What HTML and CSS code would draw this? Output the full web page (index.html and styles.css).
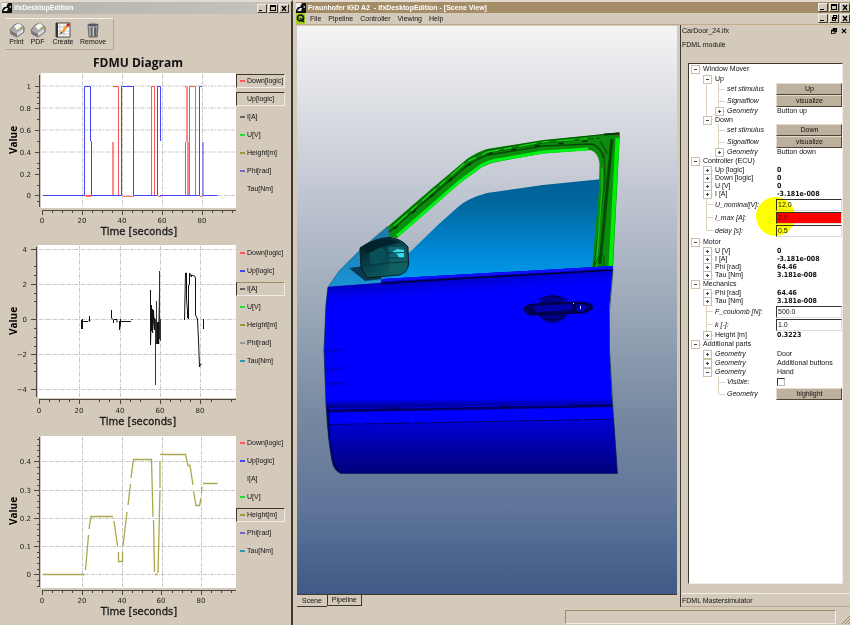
FILE: index.html
```html
<!DOCTYPE html>
<html lang="en">
<head>
<meta charset="utf-8">
<title>ifxDesktopEdition</title>
<link rel="stylesheet" href="styles.css">
</head>
<body>
<main class="desktop">
  <section class="window diagram-window">
    <header class="titlebar titlebar-idle">
      <svg class="app-icon" viewBox="0 0 10 10"><path fill="#111" d="M0 0h10v10H0z"/><path fill="#eee" d="M0 0h6L4 4H2L0 7zM1 8l3-3h2l-1 3zM7 4l2-1v2zM6 8l3-2"/></svg>
      <h1>ifxDesktopEdition</h1>
      <div class="win-buttons">
        <button class="wb" aria-label="Minimize"><svg viewBox="0 0 8 7"><path d="M1 5h3v1H1z"/></svg></button>
        <button class="wb" aria-label="Maximize"><svg viewBox="0 0 8 7"><path d="M1 0h6v6H1zM2 2v3h4V2z" fill-rule="evenodd"/></svg></button>
        <button class="wb" aria-label="Close"><svg viewBox="0 0 8 7"><path d="M2 1l4 5M6 1L2 6" stroke="#000" stroke-width="1.3"/></svg></button>
      </div>
    </header>
    <nav class="toolbar">
      <button class="tool">
        <svg viewBox="0 0 16 16"><path fill="#aaa" stroke="#555" stroke-width=".7" d="M1 8l4-5 5-2 5 4v5l-7 5-6-3z"/><path fill="#f4f4f4" d="M5 4l5-3 3 3-5 4z"/><path fill="#777" d="M2 9l6 3v3l-6-3z"/><path fill="#ddd" d="M8 11l6-4v3l-6 4z"/><path fill="#9b2" d="M11 5h2v2h-2z"/></svg>
        <span>Print</span></button>
      <button class="tool">
        <svg viewBox="0 0 16 16"><path fill="#aaa" stroke="#555" stroke-width=".7" d="M1 8l4-5 5-2 5 4v5l-7 5-6-3z"/><path fill="#f4f4f4" d="M5 4l5-3 3 3-5 4z"/><path fill="#777" d="M2 9l6 3v3l-6-3z"/><path fill="#ddd" d="M8 11l6-4v3l-6 4z"/><path fill="#9b2" d="M11 5h2v2h-2z"/></svg>
        <span>PDF</span></button>
      <button class="tool tool-wide">
        <svg viewBox="0 0 16 16"><path fill="#fff" stroke="#444" d="M1 1h14v14H1z"/><path stroke="#aaa" stroke-width=".7" d="M2 5h12M2 9h12M2 12h12M5 2v12M9 2v12"/><path fill="#333" d="M1 1h2v14H1z"/><path fill="#e93" d="M6 10l5-7 2 2-5 6z"/><path fill="#b22" d="M11 3l2-2 2 2-2 2z"/><path fill="#222" d="M5 12l1-2 2 1z"/></svg>
        <span>Create</span></button>
      <button class="tool tool-wide">
        <svg viewBox="0 0 16 16"><path fill="#8a8e92" stroke="#444" stroke-width=".7" d="M3 4h10l-1 11H4z"/><path stroke="#333" d="M6 5v9M10 5v9"/><path stroke="#ccc" d="M5 5v9M8.500 5v9"/><ellipse cx="8" cy="3" rx="6" ry="2" fill="#556" stroke="#bbb"/></svg>
        <span>Remove</span></button>
    </nav>
    <h2 class="diagram-title">FDMU Diagram</h2>

    <div class="chart">
      <svg class="plot" viewBox="0 71 236 172" role="img" aria-label="Logic signals over time">
        <path class="paper" d="M41 73h195v135H41z"/>
        <path class="grid" d="M42 86h194M42 108h194M42 130h194M42 152h194M42 195.500h194M82.500 74v133M122.500 74v133M162.500 74v133M202.500 74v133"/>
        <path class="axis" d="M39.500 75v132M42 210.500h194M35 86.500h5M35 108.500h5M35 130.500h5M35 152.500h5M35 174.500h5M35 195.500h5M37 97.500h3M37 92.500h3M37 103.500h3M37 119.500h3M37 141.500h3M37 163.500h3M37 168.500h3M37 185.500h3M37 201.500h3M42.500 210v5M82.500 210v5M122.500 210v5M162.500 210v5M202.500 210v5M52.500 210v3M62.500 210v3M72.500 210v3M92.500 210v3M102.500 210v3M112.500 210v3M132.500 210v3M142.500 210v3M152.500 210v3M172.500 210v3M182.500 210v3M192.500 210v3M212.500 210v3M222.500 210v3M232.500 210v3"/>
        <g fill="none">
          <path stroke="#f55" d="M43 195.500H113.500M113 86.500H118.500V195.500M151.500 195.500V86.500H154.500V195.500M185.500 195V142M186.500 142V86.500M185 86.500h3M188.500 195V142M189.500 195V86.500H195.500V195.500"/>
          <path stroke="#f88" stroke-width="2" d="M113 142v53M187 86v56M188 142v53"/>
          <path stroke="#44f" d="M43 195.500H84.500V86.500H90.500V141M91.500 141V195.500H121.500V86.500H133.500V195.500H157.500V86.500H160.500V141M160 195.500H199.500V86.500H202M203 142V195.500H217.500"/>
          <path stroke="#f77" d="M86 196.500h5M122 196.500h12M158 196.500h3M200 196.500h3"/>
        </g>
        <g class="ticks end"><text x="31" y="89">1</text><text x="31" y="111">0.8</text><text x="31" y="133">0.6</text><text x="31" y="155">0.4</text><text x="31" y="177">0.2</text><text x="31" y="198">0</text></g>
        <g class="ticks mid"><text x="42" y="223">0</text><text x="82" y="223">20</text><text x="122" y="223">40</text><text x="162" y="223">60</text><text x="202" y="223">80</text></g>
        <text class="axis-title" x="139" y="235">Time [seconds]</text>
        <text class="value-title" transform="translate(17 140) rotate(-90)">Value</text>
      </svg>
      <div class="legend">
        <button class="series pressed"><i class="key red"></i>Down[logic]</button>
        <button class="series pressed"><i class="key none"></i>Up[logic]</button>
        <button class="series"><i class="key black"></i>I[A]</button>
        <button class="series"><i class="key green"></i>U[V]</button>
        <button class="series"><i class="key olive"></i>Height[m]</button>
        <button class="series"><i class="key violet"></i>Phi[rad]</button>
        <button class="series"><i class="key none"></i>Tau[Nm]</button>
      </div>
    </div>

    <div class="chart">
      <svg class="plot" viewBox="0 243 236 190" role="img" aria-label="Current over time">
        <path class="paper" d="M38 245h198v153H38z"/>
        <path class="grid" d="M39 249.500h197M39 284.500h197M39 319.500h197M39 354.500h197M39 389.500h197M79.500 246v151M120.500 246v151M160.500 246v151M200.500 246v151"/>
        <path class="axis" d="M36.500 247v150M39 399.500h197M31 249.500h5M31 284.500h5M31 319.500h5M31 354.500h5M31 389.500h5M34 266.500h3M34 275.500h3M34 293.500h3M34 301.500h3M34 328.500h3M34 337.500h3M34 346.500h3M34 363.500h3M34 371.500h3M39.500 399v5M79.500 399v5M120.500 399v5M160.500 399v5M200.500 399v5M49.500 399v3M59.500 399v3M69.500 399v3M99.500 399v3M109.500 399v3M130.500 399v3M140.500 399v3M170.500 399v3M180.500 399v3M190.500 399v3M211.500 399v3M231.500 399v3"/>
        <g fill="none" stroke="#111">
          <path d="M81.500 320v9M82.500 319v10M83 321.500h5M88.500 321h2M89.500 321v-5M111.500 310v8l2 2v3M114 319.500h3v3M119.500 321v9l1-6v-5M121 321.500h10M132 320v-1M203.500 319v10"/>
          <path d="M150.500 290v55l1-40v26l1-22v24l1-15v-8l1 20v-12l1 8v-6"/>
          <path d="M155.500 319v66M156.500 301v43l1-22v20l1-20v20l1-52v-19M159.500 271v68l1-20v22" stroke="#333"/>
          <path d="M158 322v22" stroke-width="2.500"/>
          <path d="M184.500 320l1-47h1v26l1 12v7M188.500 319v-33l1-2v-11l2 4v-2l3 1 1 2v37l2 4 1 21 1 27 1-3h1"/>
        </g>
        <g class="ticks end"><text x="27" y="252">4</text><text x="27" y="287">2</text><text x="27" y="322">0</text><text x="27" y="357">−2</text><text x="27" y="392">−4</text></g>
        <g class="ticks mid"><text x="39" y="413">0</text><text x="79" y="413">20</text><text x="120" y="413">40</text><text x="160" y="413">60</text><text x="200" y="413">80</text></g>
        <text class="axis-title" x="138" y="425">Time [seconds]</text>
        <text class="value-title" transform="translate(17 321) rotate(-90)">Value</text>
      </svg>
      <div class="legend">
        <button class="series"><i class="key red"></i>Down[logic]</button>
        <button class="series"><i class="key blue"></i>Up[logic]</button>
        <button class="series pressed soft"><i class="key black"></i>I[A]</button>
        <button class="series"><i class="key green"></i>U[V]</button>
        <button class="series"><i class="key olive"></i>Height[m]</button>
        <button class="series"><i class="key gray"></i>Phi[rad]</button>
        <button class="series"><i class="key teal"></i>Tau[Nm]</button>
      </div>
    </div>

    <div class="chart">
      <svg class="plot" viewBox="0 433 236 190" role="img" aria-label="Window height over time">
        <path class="paper" d="M41 436h195v152H41z"/>
        <path class="grid" d="M42 461.500h194M42 490.500h194M42 518.500h194M42 546.500h194M42 574.500h194M82.500 437v150M122.500 437v150M162.500 437v150M201.500 437v150"/>
        <path class="axis" d="M39.500 437v150M42 590.500h194M34 461.500h5M34 490.500h5M34 518.500h5M34 546.500h5M34 574.500h5M37 439.500h3M37 445.500h3M37 450.500h3M37 456.500h3M37 467.500h3M37 473.500h3M37 479.500h3M37 485.500h3M37 495.500h3M37 501.500h3M37 507.500h3M37 513.500h3M37 524.500h3M37 529.500h3M37 535.500h3M37 541.500h3M37 552.500h3M37 557.500h3M37 563.500h3M37 569.500h3M37 580.500h3M37 586.500h3M42.500 590v5M82.500 590v5M122.500 590v5M161.500 590v5M201.500 590v5M52.500 590v3M62.500 590v3M72.500 590v3M92.500 590v3M102.500 590v3M112.500 590v3M132.500 590v3M142.500 590v3M152.500 590v3M172.500 590v3M182.500 590v3M191.500 590v3M211.500 590v3M221.500 590v3M231.500 590v3"/>
        <path fill="none" stroke="#aaa84c" stroke-width="1.300" d="M43 574.500H84.500M85.500 570L88.500 535M89 529L91 516.500H113M114 521L117.500 546M118.500 552L118.500 561.500H122.500V552M123 546L127 512M128 505L130.500 484M131 478L133.500 459.500H151.500L153 517M153.500 520L154.500 572M155 574.500H157.500M158 573L160 490M160 488V461M160.500 455V454.500H185.500L188 465.500H190L193 485M193.500 491L196 505.500H199.500L201 498M201.500 493L202 487M203 483.500H217.500"/>
        <g class="ticks end"><text x="31" y="464">0.4</text><text x="31" y="493">0.3</text><text x="31" y="521">0.2</text><text x="31" y="549">0.1</text><text x="31" y="577">0</text></g>
        <g class="ticks mid"><text x="42" y="603">0</text><text x="82" y="603">20</text><text x="122" y="603">40</text><text x="161" y="603">60</text><text x="201" y="603">80</text></g>
        <text class="axis-title" x="139" y="615">Time [seconds]</text>
        <text class="value-title" transform="translate(17 511) rotate(-90)">Value</text>
      </svg>
      <div class="legend">
        <button class="series"><i class="key red"></i>Down[logic]</button>
        <button class="series"><i class="key blue"></i>Up[logic]</button>
        <button class="series"><i class="key none"></i>I[A]</button>
        <button class="series"><i class="key green"></i>U[V]</button>
        <button class="series pressed"><i class="key olive"></i>Height[m]</button>
        <button class="series"><i class="key violet"></i>Phi[rad]</button>
        <button class="series"><i class="key teal"></i>Tau[Nm]</button>
      </div>
    </div>
  </section>

  <section class="window scene-window">
    <header class="titlebar titlebar-active">
      <svg class="app-icon" viewBox="0 0 10 10"><path fill="#111" d="M0 0h10v10H0z"/><path fill="#eee" d="M0 0h6L4 4H2L0 7zM1 8l3-3h2l-1 3zM7 4l2-1v2z"/></svg>
      <h1>Fraunhofer IGD A2 &nbsp;- ifxDesktopEdition - [Scene View]</h1>
      <div class="win-buttons">
        <button class="wb" aria-label="Minimize"><svg viewBox="0 0 8 7"><path d="M1 5h4v1H1z"/></svg></button>
        <button class="wb" aria-label="Maximize"><svg viewBox="0 0 8 7"><path d="M1 0h6v6H1zM2 2v3h4V2z" fill-rule="evenodd"/></svg></button>
        <button class="wb" aria-label="Close"><svg viewBox="0 0 8 7"><path d="M2 1l4 5M6 1L2 6" stroke="#000" stroke-width="1.3"/></svg></button>
      </div>
    </header>
    <nav class="menubar">
      <svg class="menu-icon" viewBox="0 0 9 11"><path fill="#a5cf1c" d="M0 0h9v11H0z"/><circle cx="4.500" cy="5" r="3" fill="none" stroke="#111" stroke-width="1.700"/><path stroke="#111" stroke-width="1.400" d="M4 5l4 4"/></svg>
      <button>File</button><button>Pipeline</button><button>Controller</button><button>Viewing</button><button>Help</button>
      <div class="win-buttons">
        <button class="wb" aria-label="Minimize view"><svg viewBox="0 0 8 7"><path d="M1 5h4v1H1z"/></svg></button>
        <button class="wb" aria-label="Restore view"><svg viewBox="0 0 8 7"><path d="M3 0h4v4H6v2H2V2h1zM4 1v1h2V1zM3 4v1h2V4z" fill-rule="evenodd"/></svg></button>
        <button class="wb" aria-label="Close view"><svg viewBox="0 0 8 7"><path d="M2 1l4 5M6 1L2 6" stroke="#000" stroke-width="1.3"/></svg></button>
      </div>
    </nav>
    <div class="workspace">
      <div class="scene">
        <div class="viewport">
          <svg class="model" viewBox="297 26 380 568" role="img" aria-label="Car door model">
            <defs>
              <linearGradient id="glass" x1="0" y1="0" x2="0" y2="1"><stop offset="0" stop-color="#005f96"/><stop offset=".25" stop-color="#00699f"/><stop offset=".7" stop-color="#0088d6"/><stop offset="1" stop-color="#009cf0"/></linearGradient>
              <linearGradient id="upper" gradientUnits="userSpaceOnUse" x1="0" y1="270" x2="4" y2="326"><stop offset="0" stop-color="#0000a8"/><stop offset=".25" stop-color="#000090"/><stop offset=".6" stop-color="#0000a0"/><stop offset=".85" stop-color="#0000e6"/><stop offset="1" stop-color="#0000ff"/></linearGradient>
              <linearGradient id="lower" x1="0" y1="0" x2="0" y2="1"><stop offset="0" stop-color="#0000dc"/><stop offset=".45" stop-color="#0000ac"/><stop offset="1" stop-color="#000078"/></linearGradient>
              <linearGradient id="strip" x1="0" y1="0" x2="0" y2="1"><stop offset="0" stop-color="#0000ff"/><stop offset="1" stop-color="#00007a"/></linearGradient>
              <linearGradient id="mirror" x1="0" y1="0" x2="1" y2="1"><stop offset="0" stop-color="#00141e"/><stop offset=".4" stop-color="#06404a"/><stop offset="1" stop-color="#107070"/></linearGradient>
              <linearGradient id="corner" x1="0" y1="0" x2="0" y2="1"><stop offset="0" stop-color="#1a78a8"/><stop offset="1" stop-color="#1a94d6"/></linearGradient>
              <clipPath id="body"><path d="M328 287L381 283L382 279L613 266L611 285L609 310L609.500 350L612 402L613 410L617.500 473.500H341Q334 471 332 461Q328 440 326 405L324 350L326 305Z"/></clipPath>
            </defs>
            <path fill="url(#glass)" d="M381 279L410 252L440 223L458 207Q468 198 487 193L543 185L603 179L592 270L382 283Z"/>
            <path fill="url(#corner)" stroke="#0f4d70" stroke-width=".5" d="M388 226L360 250L339 271L328 287L381 283V278L397 262L390 236Z"/>
            <path fill="#0a8d0a" d="M388.500 226L430 190L467 159Q477 152 487 149L543 140L620 132.500L613 268L592 268L599 190L599.500 163Q598 152 590 150L543 153.500L503 160.700Q486 163 478 170L460 183L397 238L389 237Z"/>
            <g fill="none">
              <path stroke="#00f218" stroke-width="3" d="M397 236L459 182L478 168Q486 161 503 159L543 152L588 149"/>
              <path stroke="#074807" stroke-width="1.600" d="M389 232L461 171Q474 159 488 155L543 146L592 144Q602 148 603 158"/>
              <path stroke="#075507" stroke-width="1" d="M389 227L467 160L487 150L543 141L619 133M393 228L465 166L488 153L543 143L600 138"/>
              <path stroke="#13d913" stroke-width="1.200" stroke-dasharray="18 5 8 7" d="M394 226L466 162L488 152L543 142L596 138"/>
              <path stroke="#022c02" stroke-width="1.500" stroke-dasharray="5 19" d="M394 229L465 167L488 154L543 145L600 140"/>
              <path stroke="#00ef08" stroke-width="4" d="M617.500 138L610.500 267"/>
              <path stroke="#044904" stroke-width="3" d="M612 139L607 190L600 264"/>
              <path stroke="#0a5c0a" stroke-width="1.500" d="M604 152L605 180L594 267M600 141L608 154"/>
              <path stroke="#17ba17" stroke-width="1.500" d="M602 168L602 192L596 267"/>
              <path stroke="#055005" d="M594 267l6-13 4 2v10"/>
              <path stroke="#033903" stroke-width="2" d="M604 134.500L619 133.500"/>
            </g>
            <path fill="#d02020" d="M616 135h2v1h-2zM595 237h1v2h-1zM604 165h1v1h-1z"/>
            <path fill="#083a50" d="M349 268L372 265L382 279L365 281Z"/>
            <path fill="url(#mirror)" stroke="#021920" d="M360 248Q374 238 390 237.500Q402 239 408 247L408.500 265Q407 273 399 275L367 278L361 268Z"/>
            <path fill="#0a5058" d="M369 252l10-6 7 5-3 13-12 1z"/>
            <path fill="#02232c" d="M362 249l13-8 14-2 12 3-12 3-10 3-12 6z"/>
            <path fill="#116060" d="M389 257l17-1v10l-5 6-12 1z"/>
            <path fill="#126470" d="M388 247l14 0 4 5v8l-16-1z"/>
            <path fill="#31dcec" d="M397 249l7 1v8h-5l-2-4-5-2z"/>
            <path stroke="#07363e" fill="none" d="M388 253l16-.5M388 258h17M363 266l25-3 20-1"/>
            <g clip-path="url(#body)">
              <path fill="#00f" d="M320 260h300v220H320z"/>
              <path fill="url(#upper)" d="M320 260H620V302L480 314L320 322Z"/>
              <path stroke="#1010ff" stroke-width="3" d="M381 280L614 267"/>
              <path stroke="#00003c" stroke-width="1.500" d="M381 283.500L470 278L614 270"/>
              <path fill="url(#strip)" d="M320 401L620 398V406L320 409Z"/>
              <path stroke="#000068" stroke-width="3" d="M326 411L615 405.500"/>
              <path stroke="#00f" stroke-width=".8" d="M329 408.500L380 408M400 408L500 406M510 405.500L570 405"/>
              <path fill="url(#lower)" d="M325 424.500L617 419V475H325z"/>
              <path stroke="#00006a" stroke-dasharray="30 4 14 3" d="M329 424.500L440 422.500L617 419"/>
              <path stroke="#0000b0" stroke-width="3" opacity=".55" d="M325 352l17-3M325 371l17-3M325 384l20-1"/>
              <path stroke="#000060" stroke-width="2" fill="none" d="M328 406L329 440L335 466L342 474"/>
            </g>
            <path fill="none" stroke="#082c50" stroke-width=".7" d="M328 287L326 305L324 350L326 405Q328 440 332 461Q334 471 341 473.500H617.500L613 410L609.500 350V310L613 269"/>
            <ellipse cx="553" cy="309" rx="15" ry="14" fill="#000088"/>
            <path fill="#000058" stroke="#000030" d="M524 308Q527 304 536 304L575 302Q592 302 593 307Q591 312 581 313L530 315Q524 313 524 308Z"/>
            <path fill="#0000a8" d="M533 306L572 304V310L536 312Z"/>
            <path fill="none" stroke="#00003c" d="M538 300Q552 292 568 300M538 315Q552 325 567 315"/>
            <path fill="#0000c0" stroke="#000030" d="M576 304h9l3 3-4 5h-8z"/><path fill="#ccd8ff" d="M580 306h1v3h-1zM573 303h1v1h-1z"/>
          </svg>
        </div>
        <div class="tabs" role="tablist">
          <button class="tab current" role="tab">Scene</button><button class="tab" role="tab">Pipeline</button>
        </div>
      </div>
      <aside class="dock">
        <div class="dock-head"><span>CarDoor_24.ifx</span>
          <div class="dock-actions">
            <button aria-label="Float"><svg viewBox="0 0 7 7"><path d="M2 0h5v5H5v2H0V2h2zM3 2h2v1h1V2zM1 4v2h3V4z" fill-rule="evenodd"/></svg></button>
            <button aria-label="Close panel"><svg viewBox="0 0 7 7"><path d="M1 1l5 5M6 1L1 6" stroke="#000" stroke-width="1.4"/></svg></button>
          </div>
        </div>
        <p class="module">FDML module</p>
        <div class="tree">
          <div class="row head"><i class="n box minus first"></i><span>Window Mover</span></div>
          <div class="row group"><i class="n"></i><i class="n box minus"></i><span>Up</span></div>
          <div class="row action"><i class="n"></i><i class="n v"></i><i class="n tee"></i><em>set stimulus</em><button class="value">Up</button></div>
          <div class="row action"><i class="n"></i><i class="n v"></i><i class="n tee"></i><em>Signalflow</em><button class="value">visualize</button></div>
          <div class="row leaf"><i class="n"></i><i class="n v"></i><i class="n box plus end"></i><em>Geometry</em><span class="value">Button up</span></div>
          <div class="row group"><i class="n"></i><i class="n box minus end"></i><span>Down</span></div>
          <div class="row action"><i class="n"></i><i class="n"></i><i class="n tee"></i><em>set stimulus</em><button class="value">Down</button></div>
          <div class="row action"><i class="n"></i><i class="n"></i><i class="n tee"></i><em>Signalflow</em><button class="value">visualize</button></div>
          <div class="row leaf"><i class="n"></i><i class="n"></i><i class="n box plus end"></i><em>Geometry</em><span class="value">Button down</span></div>

          <div class="row head"><i class="n box minus"></i><span>Controller (ECU)</span></div>
          <div class="row leaf"><i class="n"></i><i class="n box plus"></i><span>Up [logic]</span><b class="value">0</b></div>
          <div class="row leaf"><i class="n"></i><i class="n box plus"></i><span>Down [logic]</span><b class="value">0</b></div>
          <div class="row leaf"><i class="n"></i><i class="n box plus"></i><span>U [V]</span><b class="value">0</b></div>
          <div class="row leaf"><i class="n"></i><i class="n box plus"></i><span>I [A]</span><b class="value">-3.181e-008</b></div>
          <div class="row field"><i class="n"></i><i class="n tee"></i><label for="unom">U_nominal[V]:</label><input class="value" id="unom" value="12.0"></div>
          <div class="row field"><i class="n"></i><i class="n tee"></i><label for="imax">I_max [A]:</label><input class="value alert" id="imax" value="2.0"><i class="pointer-halo"></i></div>
          <div class="row field"><i class="n"></i><i class="n tee end"></i><label for="delay">delay [s]:</label><input class="value" id="delay" value="0.5"></div>

          <div class="row head"><i class="n box minus"></i><span>Motor</span></div>
          <div class="row leaf"><i class="n"></i><i class="n box plus"></i><span>U [V]</span><b class="value">0</b></div>
          <div class="row leaf"><i class="n"></i><i class="n box plus"></i><span>I [A]</span><b class="value">-3.181e-008</b></div>
          <div class="row leaf"><i class="n"></i><i class="n box plus"></i><span>Phi [rad]</span><b class="value">64.46</b></div>
          <div class="row leaf"><i class="n"></i><i class="n box plus end"></i><span>Tau [Nm]</span><b class="value">3.181e-008</b></div>

          <div class="row head"><i class="n box minus"></i><span>Mechanics</span></div>
          <div class="row leaf"><i class="n"></i><i class="n box plus"></i><span>Phi [rad]</span><b class="value">64.46</b></div>
          <div class="row leaf"><i class="n"></i><i class="n box plus"></i><span>Tau [Nm]</span><b class="value">3.181e-008</b></div>
          <div class="row field"><i class="n"></i><i class="n tee"></i><label for="fc">F_coulomb [N]:</label><input class="value" id="fc" value="500.0"></div>
          <div class="row field"><i class="n"></i><i class="n tee"></i><label for="kk">k [-]:</label><input class="value" id="kk" value="1.0"></div>
          <div class="row leaf"><i class="n"></i><i class="n box plus end"></i><span>Height [m]</span><b class="value">0.3223</b></div>

          <div class="row head"><i class="n box minus end"></i><span>Additional parts</span></div>
          <div class="row group"><i class="n"></i><i class="n box plus"></i><em>Geometry</em><span class="value">Door</span></div>
          <div class="row group"><i class="n"></i><i class="n box plus"></i><em>Geometry</em><span class="value">Additional buttons</span></div>
          <div class="row group"><i class="n"></i><i class="n box minus end"></i><em>Geometry</em><span class="value">Hand</span></div>
          <div class="row action"><i class="n"></i><i class="n"></i><i class="n tee"></i><label for="vis">Visible:</label><span class="value"><input type="checkbox" id="vis"></span></div>
          <div class="row action"><i class="n"></i><i class="n"></i><i class="n tee end"></i><em>Geometry</em><button class="value">highlight</button></div>
        </div>
        <p class="dock-foot">FDML Mastersimulator</p>
      </aside>
    </div>
    <footer class="statusbar"><div class="status-field"></div><svg class="grip" viewBox="0 0 8 8"><path stroke="#a08a62" d="M0 8l8-8M3 8l5-5M6 8l2-2"/></svg></footer>
  </section>
</main>
</body>
</html>
```
FILE: styles.css
```css
:root {
  --face: #d4cabb;
  --light: #f2ede4;
  --shade: #a08a62;
  --dark: #40382c;
}

* { box-sizing: border-box; }

body {
  margin: 0;
  background: var(--face);
  color: #111;
  font: 7px/8px "Liberation Sans", sans-serif;
}

button, input {
  font: inherit;
  color: inherit;
  margin: 0;
  padding: 0;
  border: 0;
  border-radius: 0;
  background: none;
}

h1, h2, p { margin: 0; }
svg { display: block; }

.desktop {
  display: grid;
  grid-template-columns: minmax(0, 293fr) minmax(0, 557fr);
  min-height: 100vh;
}

.window {
  display: flex;
  flex-direction: column;
  min-width: 0;
  border-top: 2px solid #e2dace;
}

.diagram-window { border-right: 2px solid var(--dark); }
.scene-window { padding-left: 3px; }

/* Title bars */
.titlebar {
  display: flex;
  align-items: center;
  gap: 2px;
  color: #fff;
}
.titlebar h1 { flex: 1; font-size: 7px; line-height: 8px; white-space: nowrap; overflow: hidden; }
.titlebar-idle { height: 12px; margin: 0 2px; background: linear-gradient(90deg, #b5b2ac, #c6c3bd); }
.titlebar-active { height: 11px; background: #a38c66; }
.app-icon { width: 10px; height: 10px; }

.win-buttons { display: flex; gap: 1px; margin-left: auto; }
.wb {
  width: 10px;
  height: 9px;
  background: var(--face);
  border: 1px solid;
  border-color: var(--light) var(--dark) var(--dark) var(--light);
}
.wb svg { width: 8px; height: 7px; }

/* Toolbar */
.toolbar {
  display: flex;
  align-self: flex-start;
  gap: 2px;
  height: 32px;
  margin: 4px 0 0 5px;
  padding: 3px 6px 0 2px;
  border-top: 1px solid var(--light);
  border-right: 1px solid #b8a98c;
  border-bottom: 1px solid #b8a98c;
}
.tool { width: 19px; display: flex; flex-direction: column; align-items: center; }
.tool-wide { width: 28px; }
.tool svg { width: 16px; height: 16px; }

.diagram-title {
  padding: 5px 15px 0 0;
  height: 21px;
  font: bold 12px/16px "Open Sans", sans-serif;
  text-align: center;
}

/* Charts */
.chart { display: flex; align-items: flex-start; }
.plot { flex: 1; min-width: 0; }
.paper { fill: #fff; }
.grid { fill: none; stroke: #c8c8c8; stroke-dasharray: 4 1 1 1; }
.axis { fill: none; stroke: #4c473e; }
.ticks { font: 7px "DejaVu Sans", sans-serif; fill: #222; }
.ticks.end { text-anchor: end; }
.ticks.mid { text-anchor: middle; }
.axis-title { font: 10px "DejaVu Sans", sans-serif; text-anchor: middle; fill: #1a1a1a; stroke: #1a1a1a; stroke-width: .3; }
.value-title { font: bold 10px "Open Sans", sans-serif; text-anchor: middle; }

.legend {
  display: flex;
  flex-direction: column;
  gap: 4px;
  width: 49px;
  margin-right: 6px;
  padding-top: 3px;
}
.series {
  display: flex;
  align-items: center;
  gap: 2px;
  height: 14px;
  padding-left: 3px;
  border: 1px solid transparent;
  white-space: nowrap;
}
.series.pressed { border-color: var(--dark) var(--light) var(--light) var(--dark); }
.series.pressed.soft { border-top-color: var(--shade); }
.key { flex: none; width: 5px; height: 2px; }
.key.red { background: #ff5555; }
.key.blue { background: #4444ff; }
.key.black { background: #666; }
.key.green { background: #22dd33; }
.key.olive { background: #9c9a3c; }
.key.violet { background: #8063c0; }
.key.gray { background: #999; }
.key.teal { background: #3395aa; }

/* Menu bar */
.menubar {
  display: flex;
  align-items: center;
  gap: 7px;
  height: 12px;
  border-bottom: 1px solid #c0ac88;
}
.menu-icon { width: 9px; height: 11px; margin-right: -2px; }

/* Scene and dock */
.workspace { flex: 1; display: flex; min-height: 0; }
.scene { flex: 1; min-width: 0; display: flex; flex-direction: column; padding: 1px 3px 0 1px; }
.viewport {
  flex: 1;
  min-height: 0;
  display: flex;
  border-bottom: 1px solid var(--dark);
  background: linear-gradient(#f4f4f4, #d5d8df 18%, #b8bfcc 34%, #9aa7b8 50%, #74879f 70%, #60769a 84%, #405a86);
}
.model { width: 100%; height: 100%; }
.tabs { display: flex; align-items: flex-start; height: 12px; }
.tab {
  height: 11px;
  padding: 0 4px;
  border: 1px solid var(--dark);
  border-top: 0;
}
.tab.current { height: 12px; padding: 0 5px; border-left: 0; border-right: 0; }

.dock {
  width: 170px;
  display: flex;
  flex-direction: column;
  border-left: 1px solid var(--dark);
}
.dock-head { display: flex; align-items: center; height: 12px; padding: 0 3px 0 1px; }
.dock-actions { display: flex; gap: 4px; margin-left: auto; }
.dock-actions svg { width: 6px; height: 6px; }
.module { padding: 4px 0 0 1px; height: 26px; }
.dock-foot {
  margin-top: 9px;
  padding: 3px 1px;
  height: 14px;
  border-top: 1px solid var(--light);
  border-bottom: 1px solid #b8a98c;
}

/* Property tree */
.tree {
  flex: 1;
  margin: 0 7px;
  background: #fff;
  border: 1px solid;
  border-color: var(--dark) var(--light) var(--light) var(--dark);
}
.row { position: relative; display: flex; align-items: center; white-space: nowrap; }
.head { height: 10px; }
.group { height: 9px; }
.leaf { height: 8px; }
.action { height: 12px; }
.field { height: 13px; }
.row > span, .row > em, .row > label { padding-left: 2px; }
.row em, .row label { font-style: italic; }
.row > .value { width: 66px; margin-left: auto; padding-left: 1px; }
.row b { font: bold 7px/8px "DejaVu Sans Condensed", "DejaVu Sans", sans-serif; }
.row > button.value {
  height: 12px;
  background: #bdb09c;
  border: 1px solid;
  border-color: #e4dccd #4c4437 #4c4437 #e4dccd;
}
.row > input.value {
  height: 12px;
  min-width: 0;
  background: #fff;
  border: 1px solid;
  border-color: #333 #ddd #ddd #333;
}
.row > input.alert { background: #f00; color: #700; }
input[type="checkbox"] {
  display: block;
  appearance: none;
  width: 8px;
  height: 8px;
  background: #fff;
  border: 1px solid;
  border-color: #333 #bbb #bbb #333;
}

/* Tree connectors: one 12px cell per level */
.n { position: relative; flex: none; align-self: stretch; width: 12px; }
.n.v {
  background: linear-gradient(#ddd2bf, #ddd2bf) 5px 0 / 1px 100% no-repeat;
}
.n.tee, .row:not(.head) > .n.box {
  background:
    linear-gradient(#ddd2bf, #ddd2bf) 5px 0 / 1px 100% no-repeat,
    linear-gradient(#ddd2bf, #ddd2bf) 6px 50% / 6px 1px no-repeat;
}
.row > .n.tee.end, .row:not(.head) > .n.box.end {
  background:
    linear-gradient(#ddd2bf, #ddd2bf) 5px 0 / 1px 50% no-repeat,
    linear-gradient(#ddd2bf, #ddd2bf) 6px 50% / 6px 1px no-repeat;
}
.head > .n.box { background: linear-gradient(#ddd2bf, #ddd2bf) 6px 50% / 6px 1px no-repeat; }
.box::before {
  content: "";
  position: absolute;
  left: 2px;
  top: calc(50% - 4px);
  width: 7px;
  height: 7px;
  border: 1px solid #cdc1aa;
  background: linear-gradient(#444, #444) center / 3px 1px no-repeat #fff;
}
.box.plus::before {
  background:
    linear-gradient(#444, #444) center / 3px 1px no-repeat,
    linear-gradient(#444, #444) center / 1px 3px no-repeat,
    #fff;
}
.pointer-halo {
  position: absolute;
  left: 67px;
  top: -14px;
  width: 39px;
  height: 39px;
  border-radius: 50%;
  background: #ff0;
  mix-blend-mode: multiply;
  pointer-events: none;
  z-index: 1;
}

/* Status bar */
.statusbar { display: flex; justify-content: flex-end; align-items: flex-end; height: 19px; padding-bottom: 2px; }
.status-field {
  width: 49%;
  height: 14px;
  margin-right: 6px;
  border: 1px solid;
  border-color: var(--shade) var(--light) var(--light) var(--shade);
}
.grip { width: 8px; height: 8px; }
```
